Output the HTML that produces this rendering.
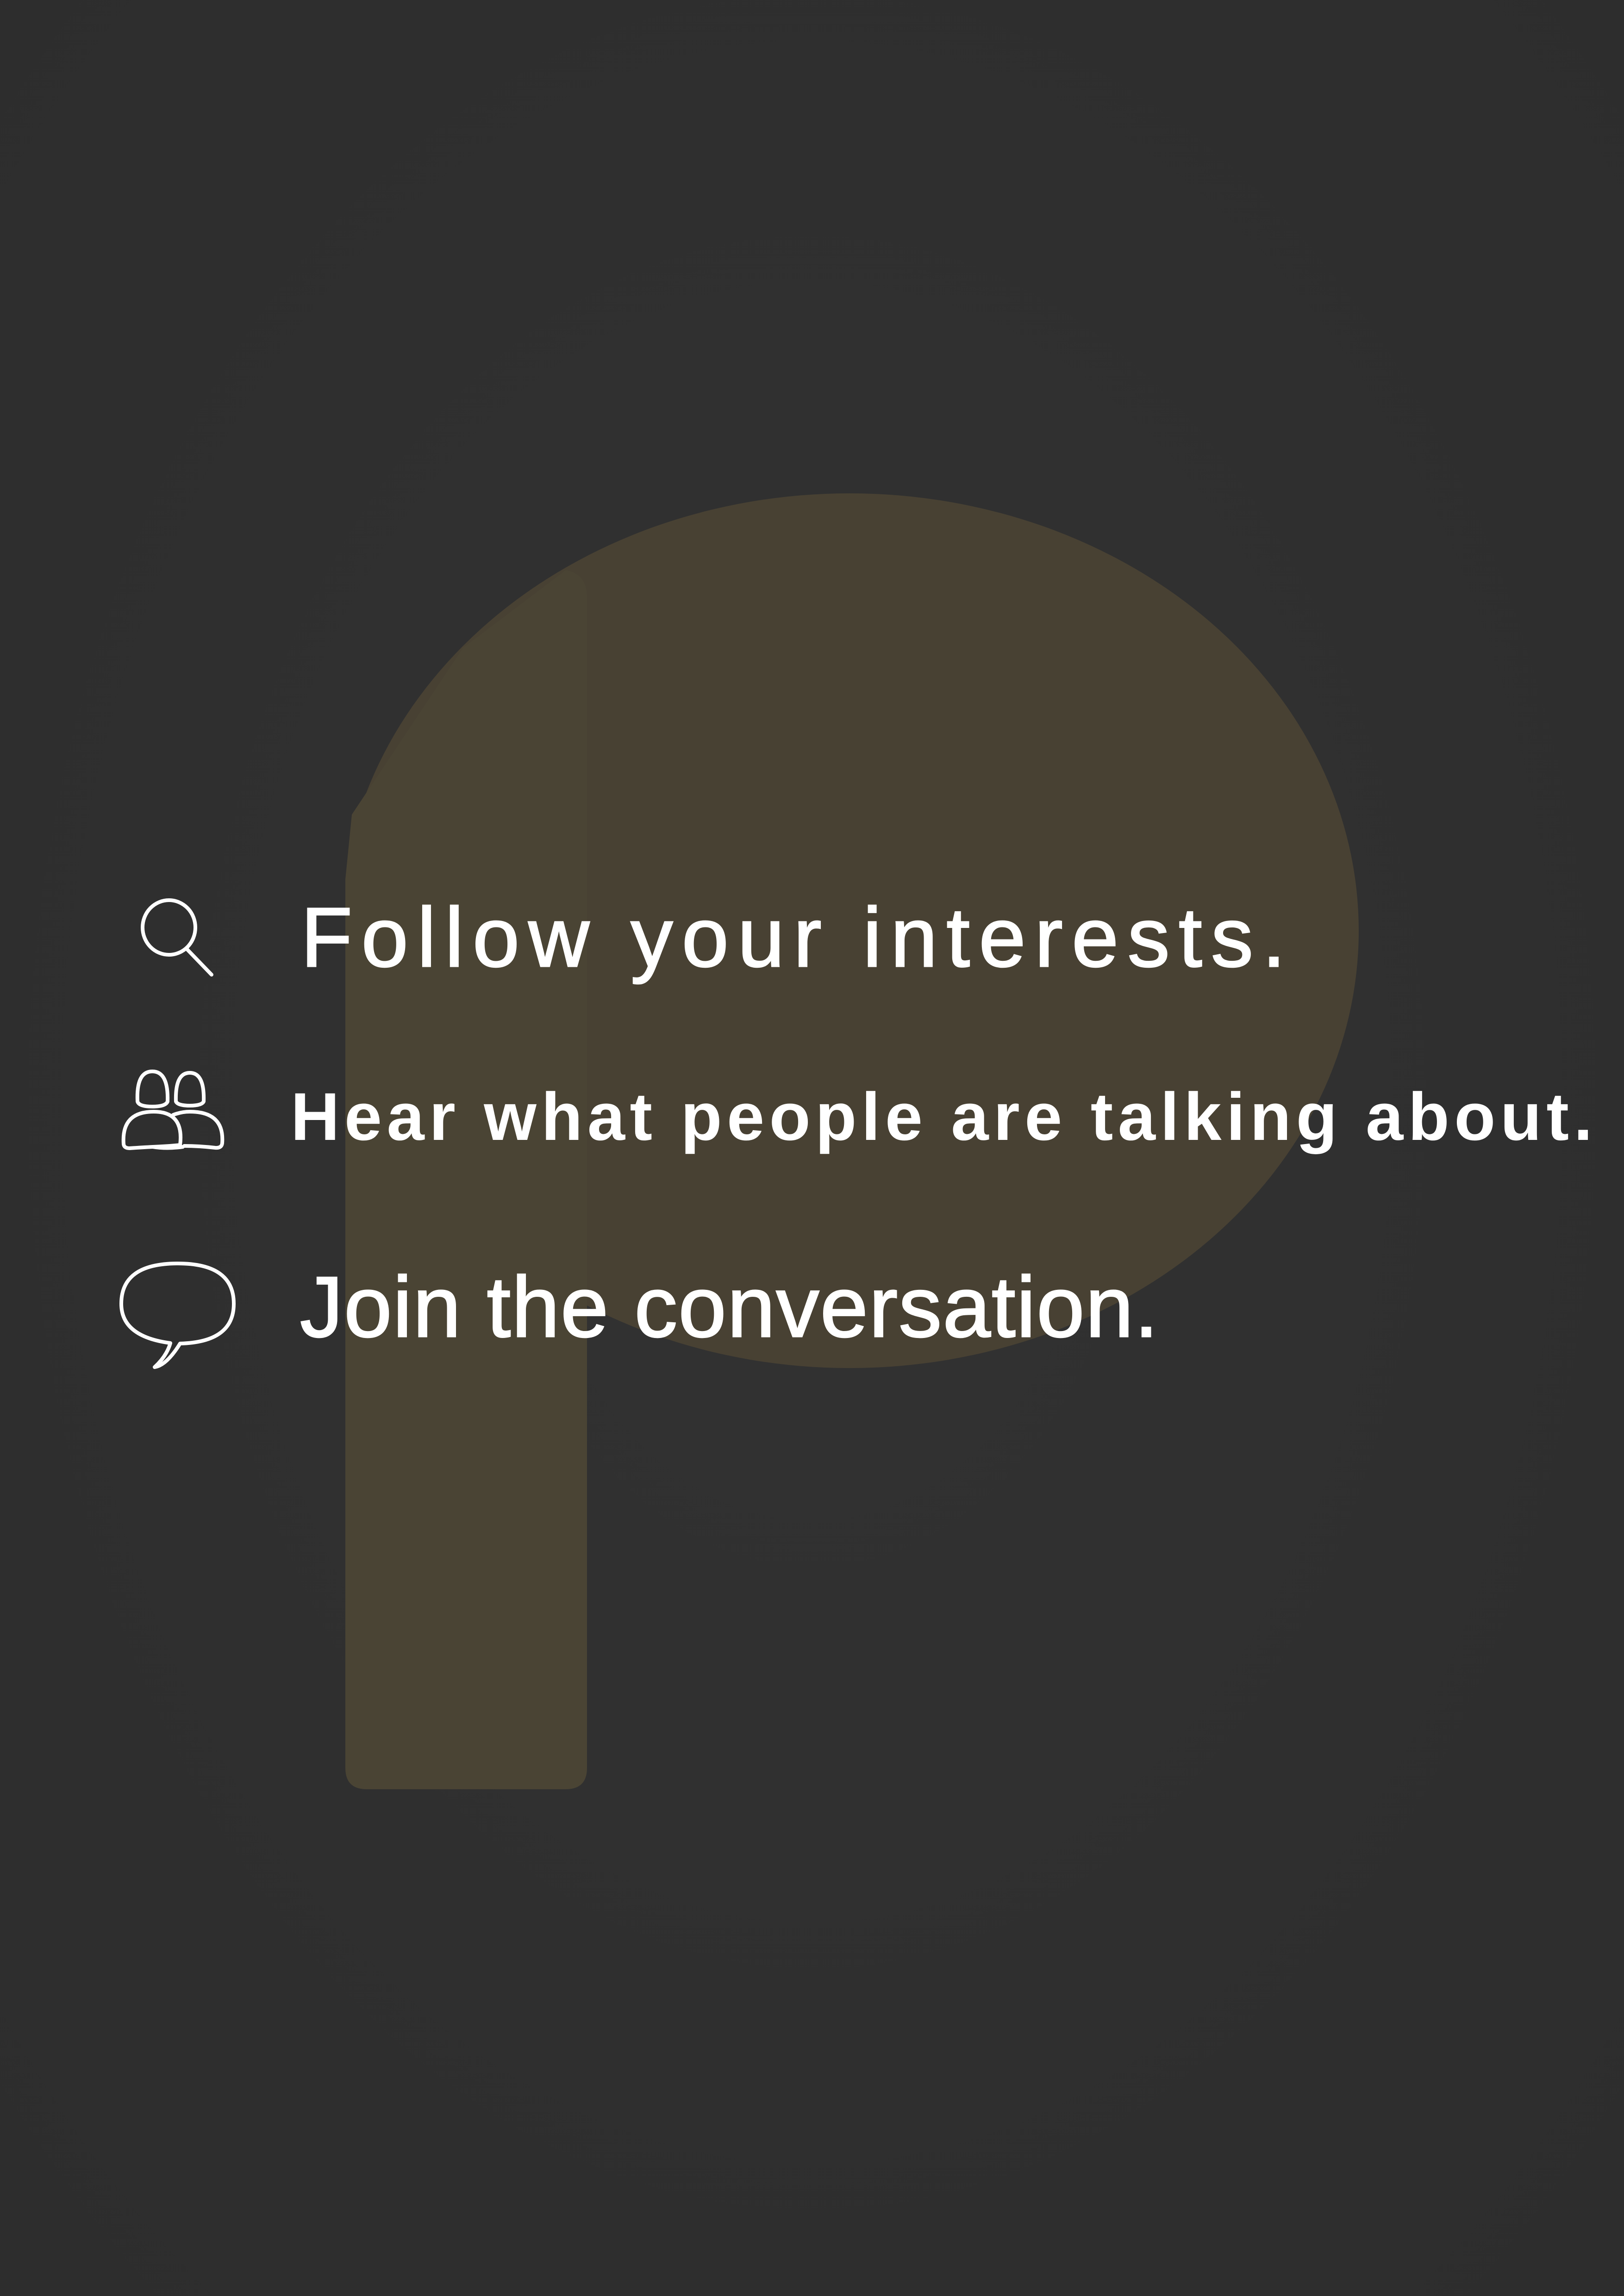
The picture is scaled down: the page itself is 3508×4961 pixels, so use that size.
<!DOCTYPE html>
<html><head><meta charset="utf-8">
<style>
html,body{margin:0;padding:0;background:#303030;}
body{width:3508px;height:4961px;overflow:hidden;}
svg{display:block;}
</style></head>
<body>
<svg width="3508" height="4961" viewBox="0 0 3508 4961" xmlns="http://www.w3.org/2000/svg">
<defs>
<radialGradient id="bg" cx="50%" cy="48%" r="70%">
<stop offset="0" stop-color="#323232"/><stop offset="1" stop-color="#2d2d2d"/>
</radialGradient>
<clipPath id="cl"><rect x="756" y="0" width="3000" height="4961"/></clipPath>
</defs>
<rect width="3508" height="4961" fill="url(#bg)"/>
<!-- P logo -->
<ellipse cx="1835" cy="2011" rx="1100" ry="945" fill="#484133" clip-path="url(#cl)"/>
<path d="M760 1760 L1000 1400 L1222 1232 Q1268 1240 1268 1290 L1268 3820 Q1268 3866 1222 3866 L792 3866 Q746 3866 746 3820 L746 1900 Z" fill="#4a4434"/>
<!-- icons -->
<g fill="none" stroke="#fff" stroke-width="8" stroke-linecap="round" stroke-linejoin="round">
<ellipse cx="365" cy="2004" rx="57" ry="59"/>
<path d="M403 2050 L457 2106"/>
<!-- people -->
<path d="M297 2380 Q294 2315 329 2315 Q364 2315 362 2380 Q358 2391 329 2391 Q300 2391 297 2380 Z"/>
<path d="M380 2380 Q378 2318 410 2318 Q442 2318 440 2380 Q436 2389 410 2389 Q384 2389 380 2380 Z"/>
<path d="M389 2474 Q398 2402 332 2402 Q262 2402 267 2472 Q268 2481 280 2481 Q310 2479 330 2478 Q360 2477 389 2474 Z"/>
<path d="M374 2409 Q392 2402 410 2402 Q485 2402 480 2470 Q479 2481 465 2480 Q430 2476 398 2476"/>
<path d="M330 2478 Q360 2483 395 2478"/>
<!-- bubble -->
<path d="M368 2902 Q262 2888 262 2817 Q262 2730 384 2730 Q505 2730 505 2817 Q505 2900 389 2903 Q360 2950 334 2954 Q360 2930 368 2902 Z"/>
</g>
<g fill="#fff" font-family="'Liberation Sans', sans-serif">
<text x="650" y="2088" font-size="182" stroke="#fff" stroke-width="3" textLength="2127" lengthAdjust="spacing">Follow your interests.</text>
<text x="628" y="2463" font-size="146" font-weight="bold" textLength="2812" lengthAdjust="spacing">Hear what people are talking about.</text>
<text x="648" y="2888" font-size="186" stroke="#fff" stroke-width="3" textLength="1854" lengthAdjust="spacing">Join the conversation.</text>
</g>
</svg>
</body></html>
